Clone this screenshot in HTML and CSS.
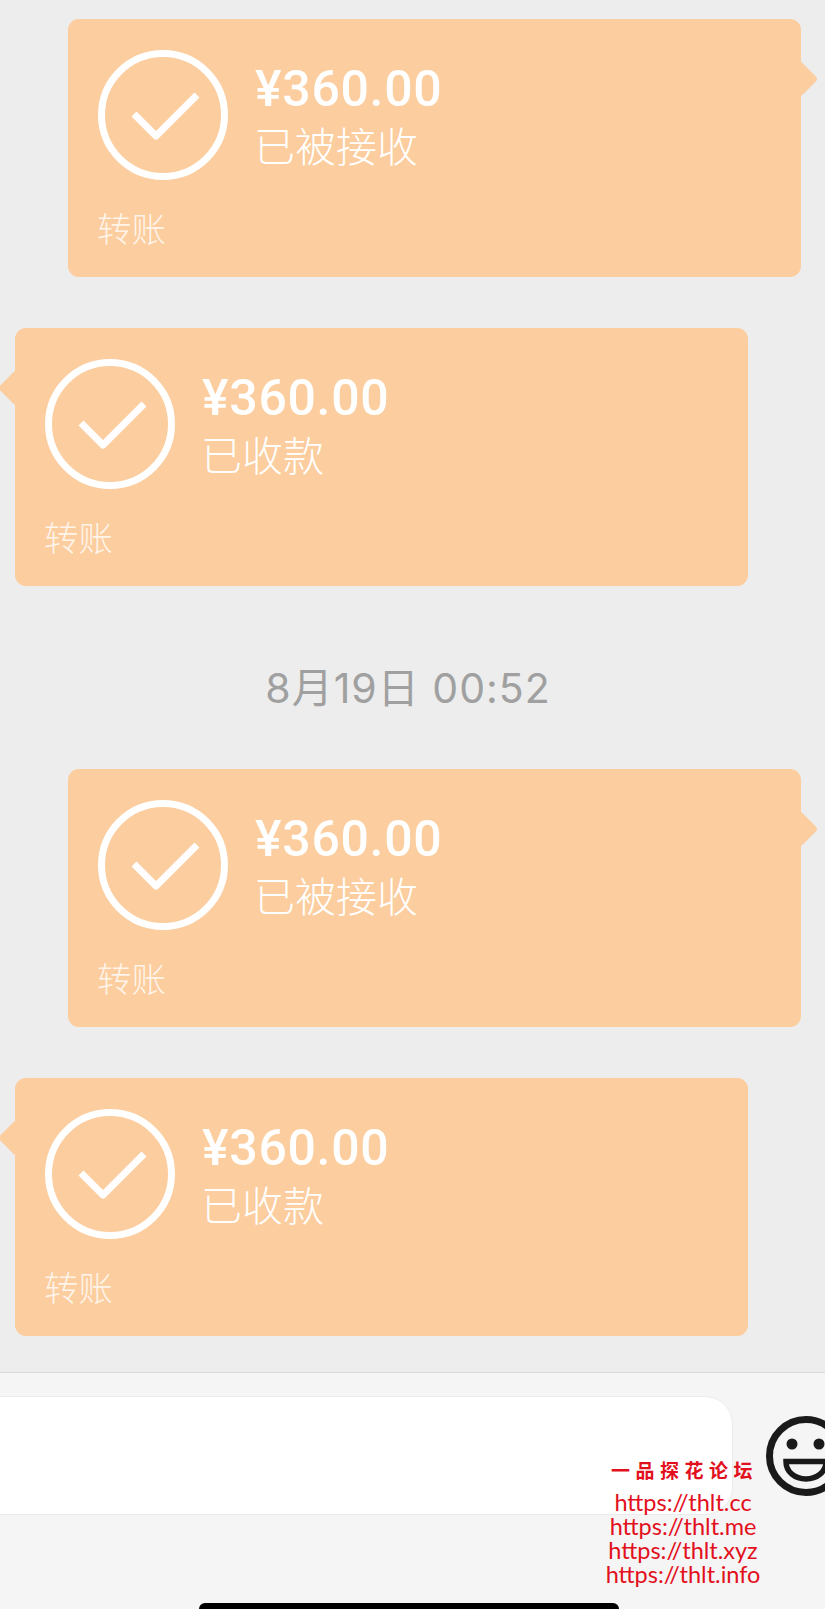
FILE: index.html
```html
<!DOCTYPE html>
<html lang="zh-CN">
<head>
  <meta charset="UTF-8">
  <meta name="viewport" content="width=device-width, initial-scale=1.0">
  <title>转账</title>
  <link rel="stylesheet" href="styles.css">
</head>
<body>
  <main class="chat">
    <div class="bubble sent">
      <div class="info">
        <svg class="check" viewBox="0 0 130 130"><circle cx="65" cy="65" r="61.5"/><path d="M36 64 L58 86 L99 45"/></svg>
        <div class="text">
          <div class="amount">¥360.00</div>
          <div class="status">已被接收</div>
        </div>
      </div>
      <div class="kind">转账</div>
    </div>
    <div class="bubble received">
      <div class="info">
        <svg class="check" viewBox="0 0 130 130"><circle cx="65" cy="65" r="61.5"/><path d="M36 64 L58 86 L99 45"/></svg>
        <div class="text">
          <div class="amount">¥360.00</div>
          <div class="status">已收款</div>
        </div>
      </div>
      <div class="kind">转账</div>
    </div>
    <div class="time">8月19日 00:52</div>
    <div class="bubble sent">
      <div class="info">
        <svg class="check" viewBox="0 0 130 130"><circle cx="65" cy="65" r="61.5"/><path d="M36 64 L58 86 L99 45"/></svg>
        <div class="text">
          <div class="amount">¥360.00</div>
          <div class="status">已被接收</div>
        </div>
      </div>
      <div class="kind">转账</div>
    </div>
    <div class="bubble received">
      <div class="info">
        <svg class="check" viewBox="0 0 130 130"><circle cx="65" cy="65" r="61.5"/><path d="M36 64 L58 86 L99 45"/></svg>
        <div class="text">
          <div class="amount">¥360.00</div>
          <div class="status">已收款</div>
        </div>
      </div>
      <div class="kind">转账</div>
    </div>
  </main>
  <footer class="bar">
    <div class="row">
      <div class="input"></div>
      <svg class="smiley" viewBox="0 0 80 80">
        <circle class="face" cx="40" cy="40" r="36.5"/>
        <circle class="eye" cx="26" cy="28" r="5.5"/>
        <circle class="eye" cx="53" cy="28" r="5.5"/>
        <path class="mouth" d="M20 45.5 H60 C60 56 51 63 40 63 C29 63 20 56 20 45.5 Z"/>
      </svg>
    </div>
    <div class="home"></div>
    <div class="mark">
      <div class="mark-title">一品探花论坛</div>
      <div class="mark-links">https://thlt.cc<br>https://thlt.me<br>https://thlt.xyz<br>https://thlt.info</div>
    </div>
  </footer>
</body>
</html>
```

FILE: styles.css
```css
html, body {
  margin: 0;
  height: 100%;
}
body {
  height: 1609px;
  display: flex;
  flex-direction: column;
  overflow: hidden;
  background: #ededed;
  font-family: "Noto Sans CJK SC", "Liberation Sans", sans-serif;
}
.chat {
  flex: 1;
  min-height: 0;
  display: flex;
  flex-direction: column;
  padding-top: 19px;
}
.bubble {
  position: relative;
  flex: none;
  box-sizing: border-box;
  width: 733px;
  height: 258px;
  margin-bottom: 51px;
  padding: 31px 30px 0;
  border-radius: 11px;
  background: #fccd9e;
  color: #fff;
}
.bubble::after {
  content: "";
  position: absolute;
  top: 47px;
  width: 26px;
  height: 26px;
  border-radius: 4px;
  background: #fccd9e;
  transform: rotate(45deg);
}
.sent {
  margin-left: 68px;
}
.sent::after {
  right: -12px;
}
.received {
  margin-left: 15px;
}
.received::after {
  left: -12px;
}
.received:nth-of-type(2), .bubble:last-child {
  margin-bottom: 0;
}
.info {
  display: flex;
  align-items: flex-start;
  gap: 27px;
}
.check {
  width: 130px;
  height: 130px;
  flex: none;
  fill: none;
  stroke: #fff;
  stroke-width: 7;
  stroke-linejoin: round;
}
.text {
  padding-top: 11px;
}
.amount {
  font-family: Roboto, "Liberation Sans", sans-serif;
  font-size: 50px;
  font-weight: 500;
  line-height: 56px;
  letter-spacing: 0.7px;
}
.status {
  margin: -2px 0 0 -1px;
  font-size: 41px;
  line-height: 58px;
  font-weight: 300;
}
.kind {
  margin: 25px 0 0 -1px;
  font-size: 34.5px;
  line-height: 44px;
  font-weight: 300;
  color: rgba(255, 255, 255, 0.8);
}
.time {
  flex: none;
  box-sizing: border-box;
  height: 183px;
  padding: 14px 9px 0 0;
  display: flex;
  align-items: center;
  justify-content: center;
  font-family: Inter, "Noto Sans CJK SC", sans-serif;
  font-size: 41px;
  letter-spacing: 1px;
  color: #a0a0a0;
}
.bar {
  position: relative;
  flex: none;
  box-sizing: border-box;
  height: 237px;
  display: flex;
  flex-direction: column;
  border-top: 1px solid #d9d9d9;
  background: #f5f5f5;
}
.row {
  display: flex;
  align-items: flex-start;
  padding-top: 23px;
}
.input {
  flex: none;
  box-sizing: border-box;
  width: 763px;
  height: 119px;
  margin-left: -30px;
  border: 1px solid #ebebeb;
  border-radius: 28px;
  background: #fff;
}
.smiley {
  width: 80px;
  height: 80px;
  flex: none;
  margin: 20px 0 0 33px;
  overflow: visible;
}
.face {
  fill: none;
  stroke: #1a1a1a;
  stroke-width: 7;
}
.mouth {
  fill: none;
  stroke: #1a1a1a;
  stroke-width: 5.5;
}
.eye {
  fill: #1a1a1a;
}
.home {
  width: 420px;
  height: 6px;
  margin: auto 0 0 199px;
  border-radius: 6px 6px 0 0;
  background: #000;
}
.mark {
  position: absolute;
  left: 599px;
  top: 84px;
  width: 168px;
  text-align: center;
  color: #e2101c;
}
.mark-title {
  margin-bottom: 7px;
  padding-left: 3px;
  font-size: 19px;
  font-weight: 700;
  letter-spacing: 5.5px;
  line-height: 26px;
}
.mark-links {
  font-family: Lato, sans-serif;
  font-size: 23.5px;
  line-height: 24px;
}
```
